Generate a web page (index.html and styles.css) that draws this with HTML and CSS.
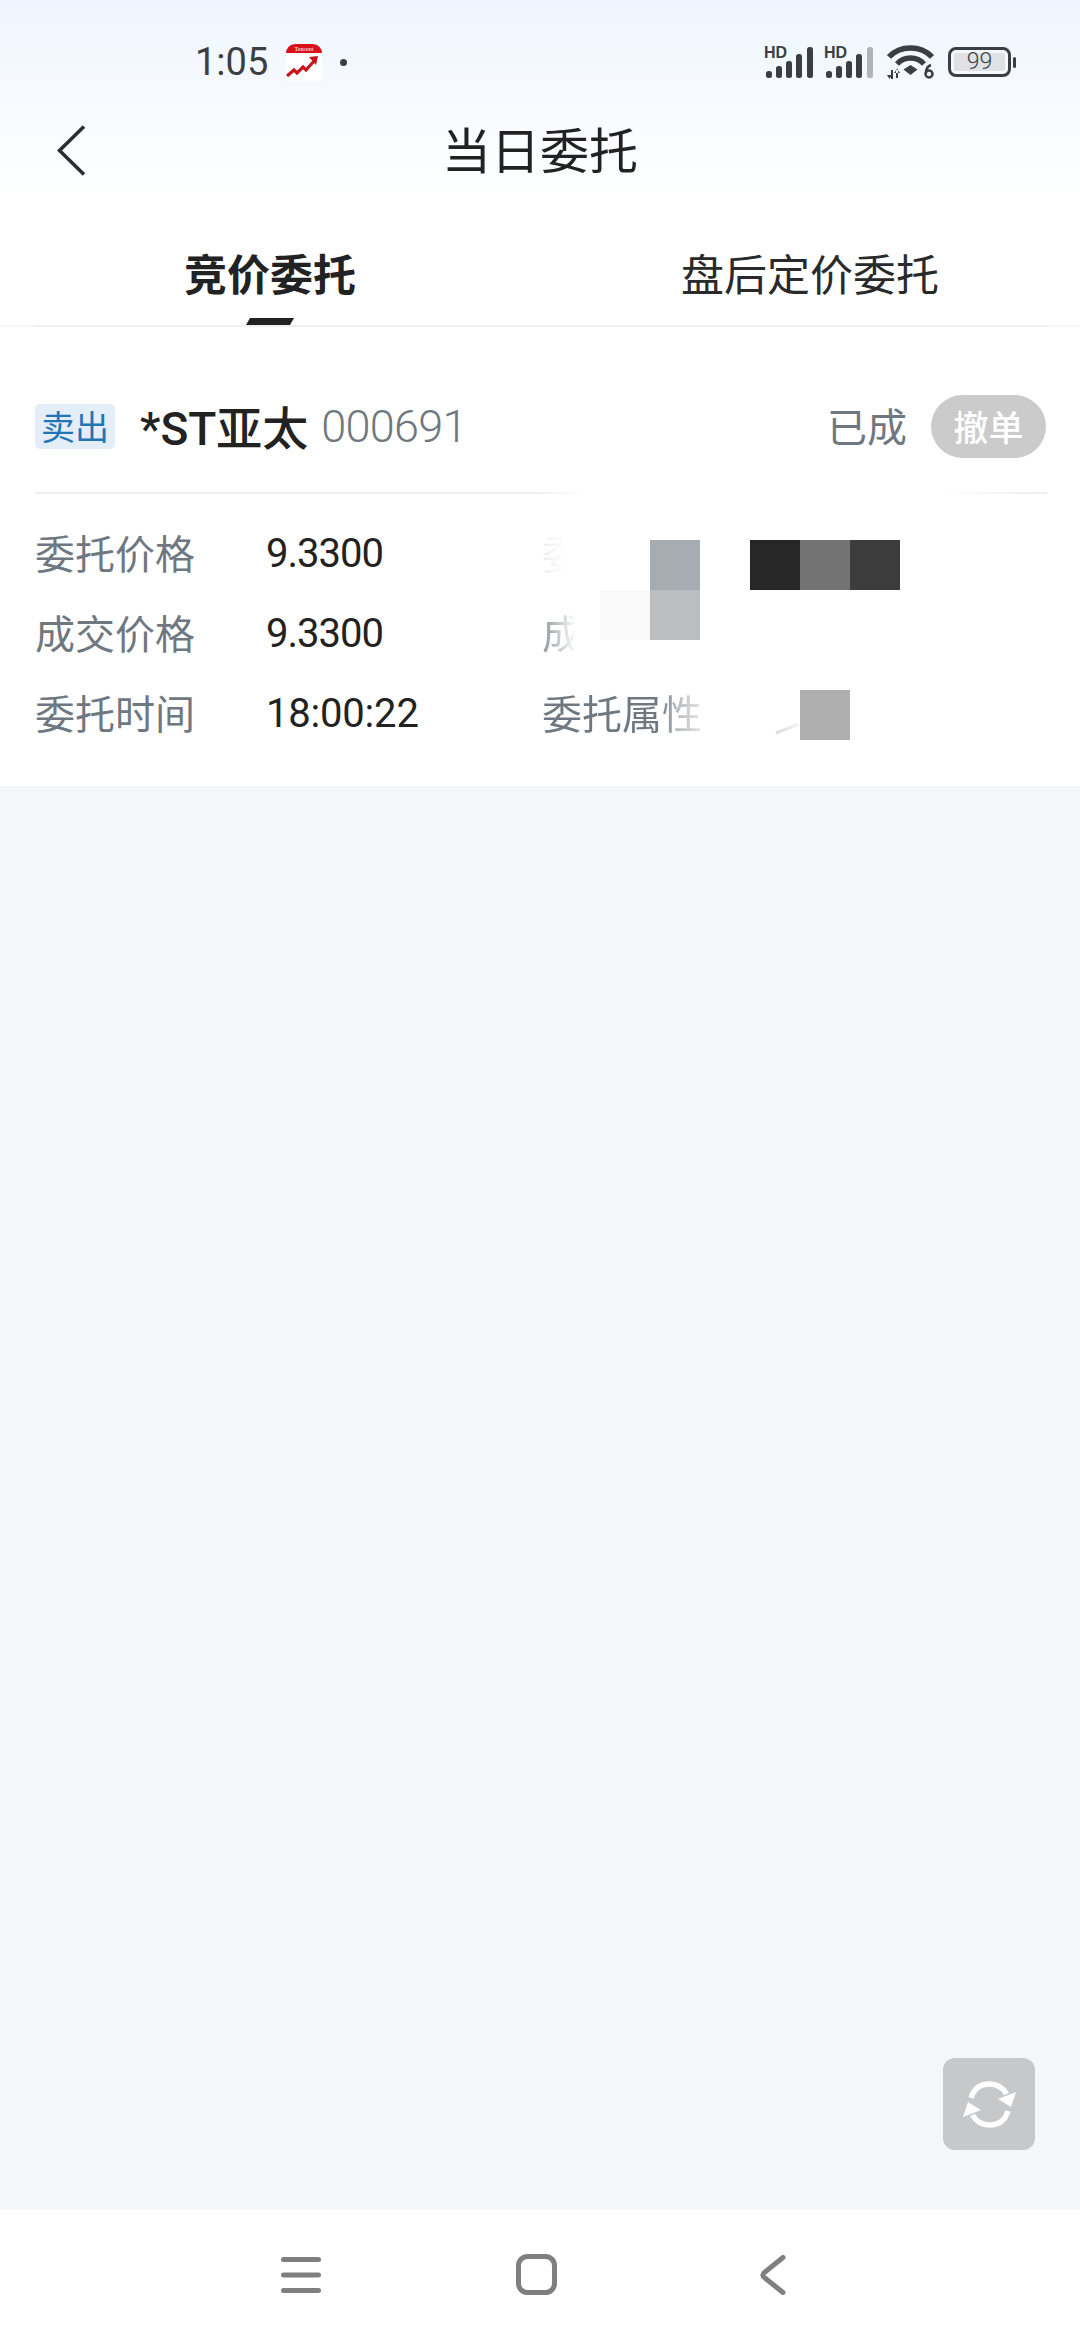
FILE: index.html
```html
<!DOCTYPE html>
<html lang="zh">
<head>
    <meta charset="UTF-8">
    <meta name="viewport" content="width=device-width, initial-scale=1.0">
    <title>当日委托</title>
    <link rel="stylesheet" href="styles.css">
</head>
<body>

    <div class="top">
        <div class="status-bar">
            <div class="status-left">
                <span class="clock">1:05</span>
                <svg class="app-icon" viewBox="0 0 36 37">
                    <path d="M0 9a9 9 0 0 1 9-9h18a9 9 0 0 1 9 9v28H0z" fill="#fff"/>
                    <path d="M0 9a9 9 0 0 1 9-9h18a9 9 0 0 1 9 9H0z" fill="#d9101a"/>
                    <text x="18" y="7" class="app-text">Tencent</text>
                    <path d="M1 32l7-6 3 3 6-6 3 3 9-10" fill="none" stroke="#c8141c" stroke-width="3.2"/>
                    <path d="M23 13l9-1-2 9z" fill="#c8141c"/>
                </svg>
                <span class="dot"></span>
            </div>
            <div class="status-right">
                <svg class="signal" viewBox="0 0 50 34">
                    <text x="0" y="13" class="hd">HD</text>
                    <rect x="2" y="26" width="6" height="7" rx="2.5" fill="#3b3f45"/>
                    <rect x="12" y="21" width="6" height="12" rx="2.5" fill="#3b3f45"/>
                    <rect x="22" y="16" width="6" height="17" rx="2.5" fill="#3b3f45"/>
                    <rect x="32" y="9" width="6" height="24" rx="2.5" fill="#3b3f45"/>
                    <rect x="43" y="2" width="6" height="31" rx="2.5" fill="#3b3f45"/>
                </svg>
                <svg class="signal" viewBox="0 0 50 34">
                    <text x="0" y="13" class="hd">HD</text>
                    <rect x="2" y="26" width="6" height="7" rx="2.5" fill="#3b3f45"/>
                    <rect x="12" y="21" width="6" height="12" rx="2.5" fill="#3b3f45"/>
                    <rect x="22" y="16" width="6" height="17" rx="2.5" fill="#3b3f45"/>
                    <rect x="32" y="9" width="6" height="24" rx="2.5" fill="#3b3f45"/>
                    <rect x="43" y="2" width="6" height="31" rx="2.5" fill="#b0b4b9"/>
                </svg>
                <svg class="wifi" viewBox="0 0 47 36">
                    <path d="M2 13C13 1 34 1 45 13" fill="none" stroke="#3b3f45" stroke-width="5.500"/>
                    <path d="M10 20C17 12 30 12 37 20" fill="none" stroke="#3b3f45" stroke-width="5.500"/>
                    <path d="M23.500 21l7 4.500-7 5.500-7-5.500z" fill="#3b3f45"/>
                    <path d="M4 26h2v9H4zM0 31h5l-2.500 4zM9 25h2v9H9zM7 29h6l-3-4z" fill="#3b3f45"/>
                    <circle cx="42" cy="30" r="3.500" fill="none" stroke="#3b3f45" stroke-width="2.500"/>
                    <path d="M39 29c0-5 2-7 5-8" fill="none" stroke="#3b3f45" stroke-width="2.500"/>
                </svg>
                <div class="battery">
                    <div class="battery-body"><span class="battery-fill">99</span></div>
                    <div class="battery-cap"></div>
                </div>
            </div>
        </div>

        <div class="nav">
            <svg class="back" viewBox="0 0 28 51">
                <path d="M27 1.500L2.500 25.500 27 49.500" fill="none" stroke="#2b2d30" stroke-width="3.600"/>
            </svg>
            <h1>当日委托</h1>
        </div>

        <div class="tabs">
            <div class="tab active">竞价委托<i class="indicator"></i></div>
            <div class="tab">盘后定价委托</div>
        </div>
    </div>
    <div class="tab-line"></div>

    <div class="order">
        <div class="order-head">
            <span class="badge">卖出</span>
            <span class="stock-name">*ST亚太</span>
            <span class="stock-code">000691</span>
            <span class="state">已成</span>
            <span class="cancel">撤单</span>
        </div>
        <div class="order-line"></div>
        <div class="order-grid">
            <span class="label">委托价格</span>
            <span class="value">9.3300</span>
            <span class="label ghost">委</span>
            <span></span>

            <span class="label">成交价格</span>
            <span class="value">9.3300</span>
            <span class="label fade-short">成</span>
            <span></span>

            <span class="label">委托时间</span>
            <span class="value time">18:00:22</span>
            <span class="label fade-long">委托属性</span>
            <span></span>
        </div>

        <!-- 打码的方块 -->
        <i class="mosaic m1"></i>
        <i class="mosaic m2"></i>
        <i class="mosaic m3"></i>
        <i class="mosaic m4"></i>
        <i class="mosaic m5"></i>
        <i class="mosaic m6"></i>
        <i class="mosaic m7"></i>
        <i class="smudge"></i>
    </div>

    <div class="empty">
        <div class="refresh">
            <svg viewBox="0 0 53 47">
                <path d="M8 17C11 7 18 3 26.500 3c7 0 13 3 17 10" fill="none" stroke="#fff" stroke-width="5.500"/>
                <path d="M53 11l-5 15-13-8z" fill="#fff"/>
                <path d="M45 30c-3 10-10 14-18.500 14-7 0-13-3-17-10" fill="none" stroke="#fff" stroke-width="5.500"/>
                <path d="M0 36l5-15 13 8z" fill="#fff"/>
            </svg>
        </div>
    </div>

    <div class="bottom-bar">
        <svg class="nav-menu" viewBox="0 0 40 36">
            <path d="M2.500 2.500h35M2.500 18h35M2.500 33.500h35" fill="none" stroke="#7f7f7f" stroke-width="5" stroke-linecap="round"/>
        </svg>
        <svg class="nav-home" viewBox="0 0 41 41">
            <rect x="2.500" y="2.500" width="36" height="36" rx="9" fill="none" stroke="#7f7f7f" stroke-width="5"/>
        </svg>
        <svg class="nav-back" viewBox="0 0 26 40">
            <path d="M23 2.500L5 17c-3 2-3 4 0 6l18 14.500" fill="none" stroke="#7f7f7f" stroke-width="5" stroke-linecap="round"/>
        </svg>
    </div>

</body>
</html>
```

FILE: styles.css
```css
* {
    box-sizing: border-box;
    font-family: "Noto Sans CJK SC", "Noto Sans", sans-serif;
}

body {
    margin: 0;
    width: 1080px;
    height: 2340px;
    background: #f4f6fa;
    display: flex;
    flex-direction: column;
    overflow: hidden;
}

.top {
    height: 325px;
    flex: none;
    background: linear-gradient(180deg, #eef5fe 0, #f6faff 90px, #fff 205px);
}

/* 状态栏 */
.status-bar {
    height: 88px;
    padding: 39px 64px 0 195px;
    display: flex;
    justify-content: space-between;
    align-items: flex-start;
}

.status-left {
    display: flex;
    align-items: center;
    height: 46px;
}

.clock {
    font-family: "Roboto", sans-serif;
    font-size: 38px;
    color: #3b3f45;
    width: 91px;
}

.app-icon {
    width: 36px;
    height: 37px;
}

.app-text {
    font-family: "Liberation Serif", serif;
    font-size: 6px;
    fill: #fff;
    text-anchor: middle;
}

.dot {
    width: 7px;
    height: 7px;
    border-radius: 50%;
    background: #3b3f45;
    margin-left: 18px;
}

.status-right {
    display: flex;
    align-items: center;
    height: 46px;
}

.signal {
    width: 50px;
    height: 34px;
    margin-right: 10px;
}

.hd {
    font-family: "Liberation Sans", sans-serif;
    font-size: 16px;
    font-weight: bold;
    fill: #3b3f45;
}

.wifi {
    width: 47px;
    height: 36px;
    margin-left: 3px;
    margin-right: 14px;
}

.battery {
    display: flex;
    align-items: center;
}

.battery-body {
    width: 63px;
    height: 30px;
    border: 3px solid #3b3f45;
    border-radius: 8px;
    padding: 3px;
}

.battery-fill {
    display: block;
    height: 18px;
    background: #dfe1e4;
    border-radius: 2px;
    font-family: "Roboto", sans-serif;
    font-size: 23px;
    font-weight: 300;
    line-height: 18px;
    text-align: center;
    color: #3b3f45;
}

.battery-cap {
    width: 3px;
    height: 11px;
    margin-left: 2px;
    background: #3b3f45;
    border-radius: 2px;
}

/* 标题 */
.nav {
    height: 124px;
    padding-left: 57px;
    display: flex;
    align-items: center;
    position: relative;
}

.back {
    width: 28px;
    height: 51px;
}

h1 {
    position: absolute;
    left: 0;
    right: 0;
    top: 0;
    margin: 0;
    line-height: 120px;
    text-align: center;
    font-size: 49px;
    font-weight: 400;
    color: #222;
}

/* 标签页 */
.tabs {
    height: 113px;
    display: flex;
}

.tab {
    flex: 1;
    display: flex;
    flex-direction: column;
    align-items: center;
    font-size: 43px;
    line-height: 60px;
    padding-top: 30px;
    color: #2a2a2a;
}

.tab.active {
    font-weight: 700;
    color: #222;
}

.indicator {
    width: 48px;
    height: 7px;
    margin-top: 16px;
    background: #222;
    clip-path: polygon(4px 0, 100% 0, 44px 100%, 0 100%);
}

.tab-line {
    height: 2px;
    margin: 0 33px 0 35px;
    background: #eeeff1;
    flex: none;
}

/* 委托卡片 */
.order {
    height: 459px;
    background: #fff;
    position: relative;
    flex: none;
}

.order-head {
    height: 165px;
    padding: 68px 34px 34px 35px;
    display: flex;
    align-items: center;
}

.badge {
    width: 80px;
    height: 45px;
    background: #e4eef8;
    border-radius: 5px;
    color: #1f75b8;
    font-size: 34px;
    line-height: 44px;
    text-align: center;
    margin-right: 25px;
}

.stock-name {
    font-size: 46px;
    font-weight: 500;
    color: #222;
    margin-right: 13px;
    margin-bottom: 4px;
    font-family: "Roboto", "Noto Sans CJK SC", sans-serif;
}

.stock-code {
    font-family: "Roboto", sans-serif;
    font-size: 45px;
    font-weight: 300;
    letter-spacing: -0.7px;
    color: #6f7880;
}

.state {
    margin-left: auto;
    margin-right: 24px;
    margin-bottom: 4px;
    font-size: 40px;
    color: #6f7880;
}

.cancel {
    width: 115px;
    height: 63px;
    border-radius: 32px;
    background: #cbcbcb;
    color: #fff;
    font-size: 35px;
    font-weight: 500;
    line-height: 61px;
    text-align: center;
}

.order-line {
    height: 2px;
    margin: 0 33px 0 35px;
    background: linear-gradient(90deg, #eeeff1 0, #eeeff1 500px, #fff 550px, #fff 905px, #eeeff1 1000px);
}

.order-grid {
    padding: 19px 0 0 35px;
    display: grid;
    grid-template-columns: 231px 276px 210px 1fr;
    grid-auto-rows: 80px;
    align-items: center;
}

.label {
    font-size: 40px;
    line-height: 56px;
    margin-bottom: 3px;
    color: #6f7880;
}

.value {
    font-family: "Roboto", sans-serif;
    font-size: 40px;
    letter-spacing: -1px;
    color: #222;
}

.value.time {
    letter-spacing: -0.2px;
}

.ghost {
    background: linear-gradient(90deg, #ececec 0, #fff 22px);
    -webkit-background-clip: text;
    background-clip: text;
    color: transparent;
}

.fade-short {
    background: linear-gradient(90deg, #8d949a 0, #fff 34px);
    -webkit-background-clip: text;
    background-clip: text;
    color: transparent;
}

.fade-long {
    background: linear-gradient(90deg, #6f7880 0, #6f7880 118px, #b8bcc0 135px, #e4e6e8 160px);
    -webkit-background-clip: text;
    background-clip: text;
    color: transparent;
}

.mosaic {
    position: absolute;
    width: 50px;
    height: 50px;
}

.m1 { left: 650px; top: 213px; background: #a7acb3; }
.m2 { left: 600px; top: 263px; background: #f9f9f9; }
.m3 { left: 650px; top: 263px; background: #bbbec1; }
.m4 { left: 750px; top: 213px; background: #272727; }
.m5 { left: 800px; top: 213px; background: #737373; }
.m6 { left: 850px; top: 213px; background: #3c3c3c; }
.m7 { left: 800px; top: 363px; background: #afafaf; }

.smudge {
    position: absolute;
    left: 775px;
    top: 400px;
    width: 25px;
    height: 3px;
    background: linear-gradient(90deg, #d8d8d8, #f4f4f4);
    transform: rotate(-22deg);
}

/* 空白区 */
.empty {
    flex: 1;
    position: relative;
}

.refresh {
    position: absolute;
    left: 943px;
    top: 1272px;
    width: 92px;
    height: 92px;
    border-radius: 12px;
    background: #c7c8ca;
    display: flex;
    align-items: center;
    justify-content: center;
}

.refresh svg {
    width: 53px;
    height: 47px;
}

/* 底部导航 */
.bottom-bar {
    height: 130px;
    background: #fff;
    flex: none;
    display: flex;
    align-items: flex-start;
    padding: 44px 0 0 281px;
}

.nav-menu {
    width: 40px;
    height: 36px;
    margin-top: 3px;
    margin-right: 195px;
}

.nav-home {
    width: 41px;
    height: 41px;
    margin-right: 203px;
}

.nav-back {
    width: 26px;
    height: 40px;
    margin-top: 1px;
}
```
